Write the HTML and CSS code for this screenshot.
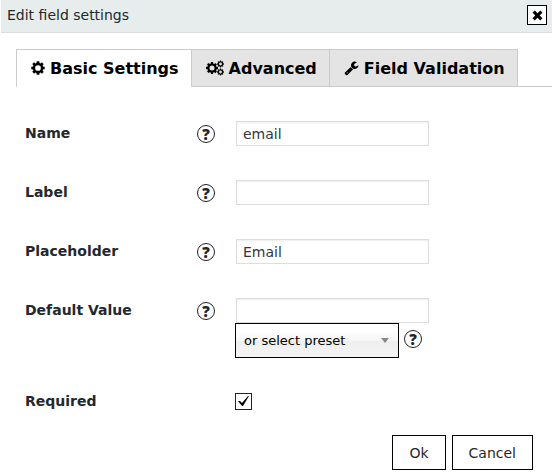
FILE: index.html
```
<!DOCTYPE html>
<html lang="en">
<head>
    <meta charset="UTF-8">
    <meta name="viewport" content="width=device-width, initial-scale=1.0">
    <title>Edit field settings</title>
    <link rel="stylesheet" href="styles.css">
</head>
<body>
    <svg class="sprite" aria-hidden="true">
        <symbol id="cog" viewBox="0 0 1536 1792">
            <path d="M1088 896a320 320 0 1 0-640 0 320 320 0 1 0 640 0zM1536 787v222q0 12-8 23t-20 13l-185 28q-19 54-39 91 35 50 107 138 10 12 10 25t-9 23q-27 37-99 108t-94 71q-12 0-26-9l-138-108q-44 23-91 38-16 136-29 186-7 28-36 28H657q-14 0-24.500-8.500T621 1634l-28-184q-49-16-90-37l-141 107q-10 9-25 9-14 0-25-11-126-114-165-168-7-10-7-23 0-12 8-23 15-21 51-66.500t54-70.500q-27-50-41-99l-183-27q-13-2-21-12.500T0 1005V783q0-12 8-23t19-13l186-28q14-46 39-92-40-57-107-138-10-12-10-24 0-10 9-23 26-36 98.500-107.500T337 263q13 0 26 10l138 107q44-23 91-38 16-136 29-186 7-28 36-28h222q14 0 24.500 8.500T915 158l28 184q49 16 90 37l142-107q9-9 24-9 13 0 25 10 129 119 165 170 7 8 7 22 0 12-8 23-15 21-51 66.500t-54 70.500q26 50 41 98l183 28q13 2 21 12.500t8 23.500z"/>
        </symbol>
    </svg>

    <div class="dialog-header">
        <span class="dialog-title">Edit field settings</span>
        <button type="button" class="close" aria-label="Close">
            <svg viewBox="0 0 10 10" width="11" height="11"><path d="M2.500 0.500L5 3L7.500 0.500L9.500 2.500L7 5L9.500 7.500L7.500 9.500L5 7L2.500 9.500L0.500 7.500L3 5L0.500 2.500z"/></svg>
        </button>
    </div>

    <div class="tabs">
        <button type="button" class="tab active">
            <svg width="14" height="16" viewBox="0 0 1536 1792"><use href="#cog"/></svg>
            Basic Settings
        </button>
        <button type="button" class="tab">
            <svg width="18" height="16" viewBox="0 0 18 16">
                <use href="#cog" x="0" y="1" width="12" height="14"/>
                <use href="#cog" x="11" y="0" width="7" height="8"/>
                <use href="#cog" x="11" y="8" width="7" height="8"/>
            </svg>
            Advanced
        </button>
        <button type="button" class="tab">
            <svg width="15" height="16" viewBox="0 0 1792 1792"><path d="M448 1472q0-26-19-45t-45-19-45 19-19 45 19 45 45 19 45-19 19-45zm644-420l-682 682q-37 37-90 37-52 0-91-37L123 1626q-38-36-38-90 0-53 38-91l681-681q39 98 114.500 173.500t173.500 114.500zm634-435q0 39-23 106-47 134-164.500 217.500t-258.500 83.500q-185 0-316.500-131.500t-131.500-316.500 131.500-316.500 316.500-131.500q58 0 121.500 16.500t107.500 46.500q16 11 16 28t-16 28l-293 169v224l193 107q5-3 79-48.500t135.500-81 70.500-35.500q15 0 23.500 10t8.500 25z"/></svg>
            Field Validation
        </button>
    </div>

    <form class="settings">
        <div class="row">
            <label for="name">Name</label>
            <button type="button" class="help">?</button>
            <input type="text" class="text" id="name" value="email">
        </div>
        <div class="row">
            <label for="label">Label</label>
            <button type="button" class="help">?</button>
            <input type="text" class="text" id="label">
        </div>
        <div class="row">
            <label for="placeholder">Placeholder</label>
            <button type="button" class="help">?</button>
            <input type="text" class="text" id="placeholder" value="Email">
        </div>
        <div class="row row-preset">
            <label for="default">Default Value</label>
            <button type="button" class="help">?</button>
            <div class="value">
                <input type="text" class="text" id="default">
                <div class="preset">
                    <div class="select">
                        <select aria-label="Preset">
                            <option>or select preset</option>
                        </select>
                    </div>
                    <button type="button" class="help">?</button>
                </div>
            </div>
        </div>
        <div class="row row-required">
            <label for="required">Required</label>
            <span></span>
            <input type="checkbox" class="check" id="required" checked>
        </div>
        <div class="buttons">
            <button type="button" class="btn">Ok</button>
            <button type="button" class="btn">Cancel</button>
        </div>
    </form>
</body>
</html>
```
FILE: styles.css
```
* {
    box-sizing: border-box;
}
body {
    margin: 0;
    background: #fff;
    color: #23282d;
    font-family: "DejaVu Sans", Verdana, sans-serif;
    font-size: 14px;
}
button, input, select {
    margin: 0;
    font-family: inherit;
    font-size: 14px;
    color: inherit;
}
.sprite {
    display: none;
}

/* header */
.dialog-header {
    display: flex;
    justify-content: space-between;
    align-items: center;
    height: 33px;
    margin-left: 1px;
    padding: 0 5px 2px 6px;
    background: #e7eded;
    border-bottom: 1px solid #ddd;
}
.close {
    display: flex;
    align-items: center;
    justify-content: center;
    width: 20px;
    height: 20px;
    padding: 0;
    background: #fff;
    border: 1px solid #000;
}

/* tabs */
.tabs {
    display: flex;
    margin: 16px 0 0 16px;
    height: 38px;
    border-bottom: 1px solid #ccc;
}
.tab {
    display: flex;
    align-items: center;
    gap: 5px;
    height: 38px;
    padding: 0 12px 0 14px;
    background: #e4e4e4;
    border: 1px solid #ccc;
    border-left: 0;
    color: #000;
    font-size: 16px;
    font-weight: bold;
    white-space: nowrap;
}
.tab.active {
    background: #fff;
    border-left: 1px solid #ccc;
    border-bottom-color: #fff;
}

/* form */
.settings {
    padding: 34px 19px 6px 25px;
}
.row {
    display: grid;
    grid-template-columns: 172px 18px 1fr;
    align-items: start;
    min-height: 25px;
    margin-bottom: 34px;
}
.row-preset {
    margin-bottom: 31px;
}
.row-required {
    margin-bottom: 21px;
}
.row label {
    font-weight: bold;
    line-height: 25px;
}
.row > .help {
    margin-top: 4px;
}
.value, .check {
    margin-left: 20px;
}
.help {
    width: 18px;
    height: 18px;
    padding: 0;
    background: #fff;
    border: 1px solid #222;
    border-radius: 50%;
    font-family: "Open Sans", sans-serif;
    font-size: 15px;
    font-weight: 800;
    line-height: 16px;
}
.text {
    display: block;
    width: 193px;
    height: 25px;
    padding: 0 6px;
    background: #fff;
    border: 1px solid #ddd;
    box-shadow: inset 0 1px 2px rgba(0, 0, 0, 0.07);
    color: #32373c;
}
.row > .text {
    margin-left: 21px;
}
.value .text {
    margin-left: 1px;
}
.preset {
    display: flex;
    align-items: flex-start;
    gap: 5px;
}
.preset .help {
    margin-top: 7px;
}
.select {
    position: relative;
}
.select select {
    display: block;
    appearance: none;
    width: 164px;
    height: 35px;
    padding: 0 8px;
    background: linear-gradient(#fff 20%, #f6f6f6 50%, #eee 52%, #f4f4f4 100%);
    border: 1px solid #000;
    border-radius: 0;
    color: #000;
    font-size: 13px;
}
.select::after {
    content: "";
    position: absolute;
    top: 15px;
    right: 10px;
    border: 4px solid transparent;
    border-top: 5px solid #888;
    border-bottom: 0;
    pointer-events: none;
}
.check {
    appearance: none;
    width: 17px;
    height: 17px;
    margin-top: 4px;
    margin-bottom: 0;
    border: 1px solid #222;
    background: #fff;
}
.check:checked::before {
    content: "";
    display: block;
    width: 15px;
    height: 15px;
    background: #000;
    clip-path: polygon(2px 7px, 4px 7px, 6px 9px, 12px 2px, 13px 2px, 7px 12px, 6px 12px);
}

/* footer */
.buttons {
    display: flex;
    justify-content: flex-end;
    gap: 6px;
}
.btn {
    height: 35px;
    padding: 0 16px;
    background: #fff;
    border: 1px solid #000;
}
```
